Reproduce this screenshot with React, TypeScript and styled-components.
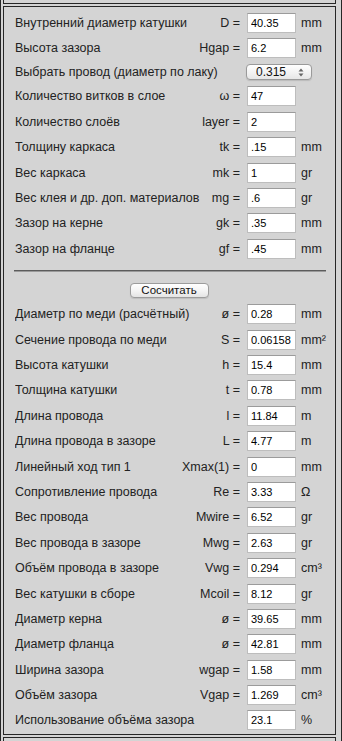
import styled, { createGlobalStyle } from "styled-components";

type Field = {
  label: string;
  sym: string;
  value: string;
  unit: string;
};

const inputs: Field[] = [
  { label: "Внутренний диаметр катушки", sym: "D", value: "40.35", unit: "mm" },
  { label: "Высота зазора", sym: "Hgap", value: "6.2", unit: "mm" },
];

const inputs2: Field[] = [
  { label: "Количество витков в слое", sym: "ω", value: "47", unit: "" },
  { label: "Количество слоёв", sym: "layer", value: "2", unit: "" },
  { label: "Толщину каркаса", sym: "tk", value: ".15", unit: "mm" },
  { label: "Вес каркаса", sym: "mk", value: "1", unit: "gr" },
  { label: "Вес клея и др. доп. материалов", sym: "mg", value: ".6", unit: "gr" },
  { label: "Зазор на керне", sym: "gk", value: ".35", unit: "mm" },
  { label: "Зазор на фланце", sym: "gf", value: ".45", unit: "mm" },
];

const results: Field[] = [
  { label: "Диаметр по меди (расчётный)", sym: "ø", value: "0.28", unit: "mm" },
  { label: "Сечение провода по меди", sym: "S", value: "0.06158", unit: "mm²" },
  { label: "Высота катушки", sym: "h", value: "15.4", unit: "mm" },
  { label: "Толщина катушки", sym: "t", value: "0.78", unit: "mm" },
  { label: "Длина провода", sym: "l", value: "11.84", unit: "m" },
  { label: "Длина провода в зазоре", sym: "L", value: "4.77", unit: "m" },
  { label: "Линейный ход тип 1", sym: "Xmax(1)", value: "0", unit: "mm" },
  { label: "Сопротивление провода", sym: "Re", value: "3.33", unit: "Ω" },
  { label: "Вес провода", sym: "Mwire", value: "6.52", unit: "gr" },
  { label: "Вес провода в зазоре", sym: "Mwg", value: "2.63", unit: "gr" },
  { label: "Объём провода в зазоре", sym: "Vwg", value: "0.294", unit: "cm³" },
  { label: "Вес катушки в сборе", sym: "Mcoil", value: "8.12", unit: "gr" },
  { label: "Диаметр керна", sym: "ø", value: "39.65", unit: "mm" },
  { label: "Диаметр фланца", sym: "ø", value: "42.81", unit: "mm" },
  { label: "Ширина зазора", sym: "wgap", value: "1.58", unit: "mm" },
  { label: "Объём зазора", sym: "Vgap", value: "1.269", unit: "cm³" },
  { label: "Использование объёма зазора", sym: "", value: "23.1", unit: "%" },
];

const FieldRow: React.FC<{ field: Field }> = ({ field }) => (
  <Row>
    <Label $wide={!field.sym}>{field.label}</Label>
    {field.sym && <Eq>{field.sym} =</Eq>}
    <ValueInput defaultValue={field.value} />
    <Unit>{field.unit}</Unit>
  </Row>
);

const App = () => {
  return (
    <Page>
      <GlobalStyle />
      <TitlePanel />
      <Panel>
        {inputs.map((f) => (
          <FieldRow key={f.sym} field={f} />
        ))}
        <SelectRow>
          <span>Выбрать провод (диаметр по лаку)</span>
          <SelectWrap>
            <WireSelect defaultValue="0.315">
              <option>0.250</option>
              <option>0.280</option>
              <option>0.315</option>
              <option>0.355</option>
            </WireSelect>
            <Arrows width="6" height="9" viewBox="0 0 6 9">
              <path d="M3 0.5 L5.5 3.5 H0.5 Z" fill="#666" />
              <path d="M3 8.5 L5.5 5.5 H0.5 Z" fill="#666" />
            </Arrows>
          </SelectWrap>
        </SelectRow>
        {inputs2.map((f) => (
          <FieldRow key={f.sym} field={f} />
        ))}
        <Divider />
        <ButtonBar>
          <CalcButton type="button">Сосчитать</CalcButton>
        </ButtonBar>
        {results.map((f) => (
          <FieldRow key={f.label} field={f} />
        ))}
      </Panel>
      <NextPanel />
    </Page>
  );
};

export default App;

const GlobalStyle = createGlobalStyle`
  html, body {
    margin: 0;
    padding: 0;
    background: #d4d4d4;
  }
  body {
    font-family: "Liberation Sans", Arial, Helvetica, sans-serif;
    color: #222;
  }
`;

const Page = styled.div`
  width: 342px;
  min-height: 100vh;
  box-sizing: border-box;
  border-left: 1px solid #262626;
  border-right: 1px solid #262626;
  padding: 0 5px 0 2px;
  overflow: hidden;
`;

const Panel = styled.section`
  border: 1px solid #262626;
  margin-top: 2px;
  padding: 3px 9px 1px 11px;
`;

const TitlePanel = styled.div`
  border: 1px solid #262626;
  border-top: none;
  height: 4px;
  box-sizing: border-box;
`;

const NextPanel = styled.div`
  border: 1px solid #262626;
  margin-top: 2px;
  height: 60px;
`;

const Row = styled.div`
  display: grid;
  grid-template-columns: 1fr auto 49px 30px;
  align-items: center;
  height: 25.4px;
  font-size: 12.5px;
  white-space: nowrap;
`;

const SelectRow = styled(Row)`
  grid-template-columns: 1fr 79px;
  height: 23px;
`;

const Label = styled.span<{ $wide?: boolean }>`
  grid-column: ${(p) => (p.$wide ? "1 / 3" : "1")};
  overflow: hidden;
`;

const Eq = styled.span`
  text-align: right;
  padding-right: 7px;
`;

const ValueInput = styled.input`
  grid-column: 3;
  box-sizing: border-box;
  width: 49px;
  height: 20px;
  margin: 0;
  padding: 0 2px 0 3px;
  border: 1px solid #bdbdbd;
  border-top-color: #9b9b9b;
  background: #fff;
  font-family: "Liberation Sans", Arial, sans-serif;
  font-size: 11px;
  color: #000;
  outline: none;
`;

const Unit = styled.span`
  grid-column: 4;
  padding-left: 5px;
`;

const SelectWrap = styled.div`
  position: relative;
  width: 66px;
  height: 16px;
  margin-left: -1px;
`;

const WireSelect = styled.select`
  appearance: none;
  -webkit-appearance: none;
  box-sizing: border-box;
  width: 66px;
  height: 16px;
  margin: 0;
  padding: 0 0 0 9px;
  border: 1px solid #9a9a9a;
  border-radius: 4px;
  background: linear-gradient(#ffffff, #f1f1f1 60%, #e6e6e6);
  box-shadow: 0 1px 1px rgba(0, 0, 0, 0.12);
  font-family: "Liberation Sans", Arial, sans-serif;
  font-size: 12px;
  line-height: 14px;
  color: #111;
`;

const Arrows = styled.svg`
  position: absolute;
  right: 8px;
  top: 4px;
  pointer-events: none;
`;

const Divider = styled.hr`
  margin: 8px 0 0 -1px;
  height: 0;
  border: none;
  border-top: 1px solid #5c5c5c;
  border-bottom: 1px solid #9a9a9a;
`;

const ButtonBar = styled.div`
  display: flex;
  justify-content: center;
  padding: 11px 3px 0 0;
  margin-bottom: 4px;
`;

const CalcButton = styled.button`
  width: 79px;
  height: 15px;
  margin: 0;
  padding: 0;
  border: 1px solid #9c9c9c;
  border-radius: 4px;
  background: linear-gradient(#ffffff, #f3f3f3 55%, #e4e4e4);
  box-shadow: 0 1px 1px rgba(0, 0, 0, 0.1);
  font-family: "Liberation Sans", Arial, sans-serif;
  font-size: 11.5px;
  line-height: 13px;
  color: #111;
`;
